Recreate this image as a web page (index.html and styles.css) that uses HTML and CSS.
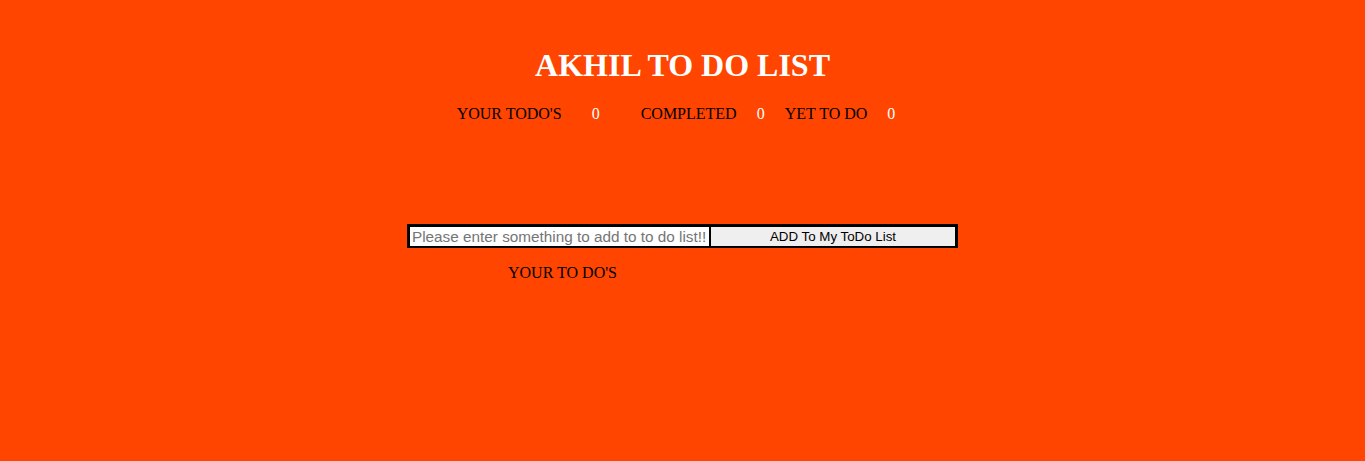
FILE: index.html
```html
<!DOCTYPE html>
<html>
<head>
<meta charset="utf-8">
<link rel="stylesheet" href="styles.css">
</head>
<body>
<div class="app">
  <h1 class="title">AKHIL TO DO LIST</h1>
  <div class="stats">
    <span class="label">YOUR TODO'S</span><span class="num n1">0</span>
    <span class="label l2">COMPLETED</span><span class="num n2">0</span>
    <span class="label l3">YET TO DO</span><span class="num n3">0</span>
  </div>
  <div class="column">
    <div class="entry">
      <input class="field" type="text" placeholder="Please enter something to add to to do list!!">
      <button class="add">ADD To My ToDo List</button>
    </div>
    <div class="list-title">YOUR TO DO'S</div>
  </div>
</div>
</body>
</html>
```
FILE: styles.css
```css
html, body {
  margin: 0;
  padding: 0;
  background: #ff4500;
  height: 100%;
}
body {
  font-family: "Liberation Serif", "Times New Roman", serif;
  color: #000;
}
.app {
  display: flex;
  flex-direction: column;
  align-items: center;
  padding-top: 47px;
}
.title {
  margin: 0;
  font-size: 32px;
  line-height: 37px;
  font-weight: bold;
  color: #fff;
}
.stats {
  display: flex;
  align-items: baseline;
  margin-top: 21px;
  font-size: 16px;
  line-height: 18px;
  margin-left: -13px;
}
.num { color: #fff; }
.n1 { margin-left: 30px; }
.l2 { margin-left: 41px; }
.n2 { margin-left: 20px; }
.l3 { margin-left: 20px; }
.n3 { margin-left: 20px; }
.column {
  display: flex;
  flex-direction: column;
  margin-top: 101px;
  width: 551px;
}
.entry {
  display: flex;
  height: 24px;
  box-sizing: border-box;
  border: 3px solid #000;
  border-bottom-width: 2px;
  background: #000;
  gap: 2px;
}
.field {
  width: 299px;
  box-sizing: border-box;
  border: 0;
  margin: 0;
  padding: 0 2px;
  font-family: "Liberation Sans", Arial, sans-serif;
  font-size: 15.3px;
  background: #fff;
  outline: none;
}
.field::placeholder { color: #757575; }
.add {
  flex: 1;
  border: 0;
  margin: 0;
  padding: 0;
  background: #efefef;
  font-family: "Liberation Sans", Arial, sans-serif;
  font-size: 13.333px;
  color: #000;
}
.list-title {
  margin-top: 16px;
  margin-left: 101px;
  font-size: 16px;
  line-height: 18px;
}
```
